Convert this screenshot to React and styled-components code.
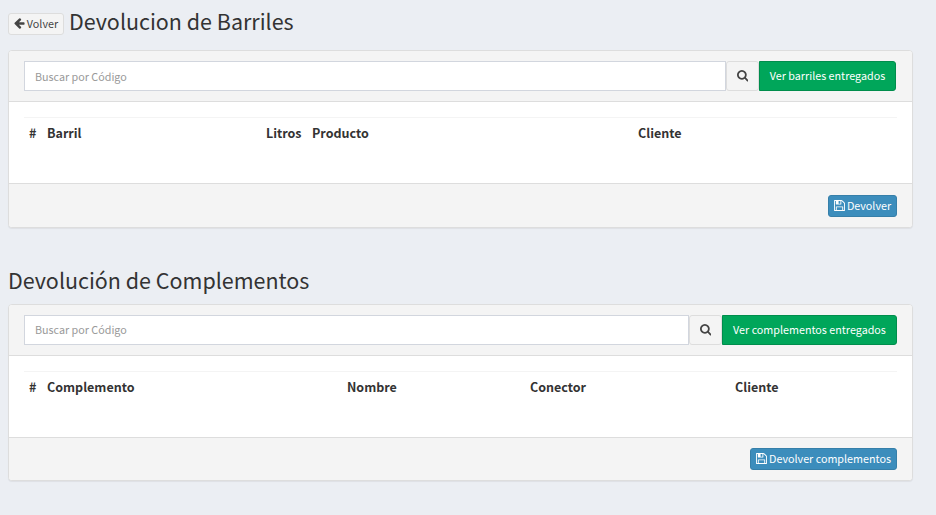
import React from "react";
import styled, { createGlobalStyle } from "styled-components";

const GlobalStyle = createGlobalStyle`
  *, *::before, *::after { box-sizing: border-box; }
  body {
    margin: 0;
    background: #ebeef3;
    color: #333;
    font-family: "Source Sans Pro", "Noto Sans CJK JP", sans-serif;
    font-size: 12.5px;
    line-height: 20px;
  }
  button, input { font-family: inherit; margin: 0; }
`;

const Page = styled.main`
  height: 515px;
  padding: 8px 23px 0 8px;
  overflow: hidden;
`;

const Heading = styled.header`
  display: flex;
  align-items: flex-end;
  height: 27px;
  gap: 5px;
  margin-top: ${(p) => p.$top || 0}px;
  margin-bottom: ${(p) => p.$bottom}px;
`;

const Title = styled.h1`
  margin: 0;
  font-size: 21.47px;
  font-weight: 400;
  line-height: 28px;
  white-space: nowrap;
`;

const Button = styled.button`
  display: inline-flex;
  align-items: center;
  justify-content: center;
  flex: none;
  width: ${(p) => p.$width}px;
  height: 22px;
  padding: 0 0 1px;
  gap: 2px;
  border: 1px solid #ddd;
  border-radius: 3px;
  background: #f4f4f4;
  color: #444;
  font-size: 10.75px;
  line-height: 18px;
  white-space: nowrap;
`;

const PrimaryButton = styled(Button)`
  border-color: #367fa9;
  background: #3c8dbc;
  color: #fff;
`;

const SearchButton = styled(Button)`
  height: 30px;
  padding: 0;
`;

const SuccessButton = styled(Button)`
  height: 30px;
  padding: 0;
  border-color: #008d4c;
  border-radius: 0 3px 3px 0;
  background: #00a65a;
  color: #fff;
`;

const Box = styled.section`
  border: 1px solid #ddd;
  border-radius: 4px;
  background: #fff;
  box-shadow: 0 1px 1px rgba(0, 0, 0, 0.06);
  overflow: hidden;
`;

const BoxHeader = styled.div`
  display: flex;
  height: 51px;
  padding: 10px ${(p) => p.$right}px 10px 15px;
  border-bottom: 1px solid #ddd;
  background: #f4f4f4;
`;

const SearchInput = styled.input`
  flex: 1;
  min-width: 0;
  height: 30px;
  padding: 0 10px ${(p) => p.$lift}px;
  border: 1px solid #d2d6de;
  border-radius: 0;
  background: #fff;
  font-size: 10.75px;
  outline: none;
  &::placeholder { color: #999; opacity: 1; }
`;

const BoxBody = styled.div`
  height: 81px;
  padding: 15px 15px 0;
`;

const Table = styled.table`
  width: 100%;
  border-collapse: collapse;
  table-layout: fixed;
`;

const HeadCell = styled.th`
  width: ${(p) => (p.$width ? `${p.$width}px` : "auto")};
  height: 31px;
  padding: 0 0 1px 5px;
  border-top: 1px solid #f4f4f4;
  text-align: left;
  font-weight: 700;
  line-height: 20px;
`;

const BoxFooter = styled.footer`
  display: flex;
  justify-content: flex-end;
  height: ${(p) => p.$height}px;
  padding: ${(p) => p.$top}px 15px 0;
  border-top: 1px solid #ddd;
  background: #f4f4f4;
`;

const Glyph = styled.svg`
  display: block;
  flex: none;
  fill: currentColor;
`;

const paths = {
  arrow:
    "M1664 896v128q0 53-32.5 90.5T1547 1152H843l293 294q38 36 38 90t-38 90l-75 76q-37 37-90 37-52 0-91-37L229 1050q-37-37-37-90 0-52 37-91l651-650q38-38 91-38 52 0 90 38l75 74q38 38 38 91t-38 91L843 768h704q52 0 84.5 37.5T1664 896z",
  search:
    "M1216 832q0-185-131.5-316.5T768 384 451.5 515.5 320 832t131.5 316.5T768 1280t316.5-131.5T1216 832zm512 832q0 52-38 90t-90 38q-54 0-90-38l-343-342q-179 124-399 124-143 0-273.5-55.5t-225-150-150-225T64 832t55.5-273.5 150-225 225-150T768 128t273.5 55.5 225 150 150 225T1472 832q0 220-124 399l343 343q37 37 37 90z",
  save:
    "M512 1536h768v-384H512v384zm896 0h128V640q0-14-10-38.5t-20-34.5l-281-281q-10-10-34-20t-39-10v416q0 40-28 68t-68 28H480q-40 0-68-28t-28-68V256H256v1280h128v-416q0-40 28-68t68-28h832q40 0 68 28t28 68v416zM1024 608V288q0-13-9.5-22.5T992 256H800q-13 0-22.5 9.5T768 288v320q0 13 9.5 22.5T800 640h192q13 0 22.5-9.5t9.5-22.5zm640 32v928q0 40-28 68t-68 28H224q-40 0-68-28t-28-68V224q0-40 28-68t68-28h928q40 0 88 20t76 48l280 280q28 28 48 76t20 88z",
};

const boxes = {
  arrow: "160 160 1536 1600",
  search: "64 128 1664 1664",
  save: "128 128 1536 1536",
};

function Icon({ name, size }) {
  return (
    <Glyph viewBox={boxes[name]} width={size} height={size} aria-hidden="true">
      <path d={paths[name]} />
    </Glyph>
  );
}

function ReturnBox({ columns, listLabel, listWidth, submitLabel, submitWidth, headerRight, footerHeight, footerTop, inputLift }) {
  return (
    <Box>
      <BoxHeader $right={headerRight}>
        <SearchInput placeholder="Buscar por Código" $lift={inputLift} />
        <SearchButton $width={33} aria-label="Buscar">
          <Icon name="search" size={11.5} />
        </SearchButton>
        <SuccessButton $width={listWidth}>{listLabel}</SuccessButton>
      </BoxHeader>
      <BoxBody>
        <Table>
          <thead>
            <tr>
              {columns.map(([label, width]) => (
                <HeadCell key={label} $width={width}>{label}</HeadCell>
              ))}
            </tr>
          </thead>
        </Table>
      </BoxBody>
      <BoxFooter $height={footerHeight} $top={footerTop}>
        <PrimaryButton $width={submitWidth}>
          <Icon name="save" size={11} />
          {submitLabel}
        </PrimaryButton>
      </BoxFooter>
    </Box>
  );
}

export default function App() {
  return (
    <>
      <GlobalStyle />
      <Page>
        <Heading $bottom={15}>
          <Button $width={56}>
            <Icon name="arrow" size={11} />
            Volver
          </Button>
          <Title>Devolucion de Barriles</Title>
        </Heading>
        <ReturnBox
          columns={[["#", 18], ["Barril", 219], ["Litros", 46], ["Producto", 326], ["Cliente"]]}
          listLabel="Ver barriles entregados"
          listWidth={137}
          submitLabel="Devolver"
          submitWidth={69}
          headerRight={16}
          footerHeight={44}
          footerTop={11}
          inputLift={0}
        />
        <Heading $top={39} $bottom={10}>
          <Title>Devolución de Complementos</Title>
        </Heading>
        <ReturnBox
          columns={[["#", 18], ["Complemento", 300], ["Nombre", 183], ["Conector", 205], ["Cliente"]]}
          listLabel="Ver complementos entregados"
          listWidth={175}
          submitLabel="Devolver complementos"
          submitWidth={147}
          headerRight={15}
          footerHeight={43}
          footerTop={10}
          inputLift={2}
        />
      </Page>
    </>
  );
}
